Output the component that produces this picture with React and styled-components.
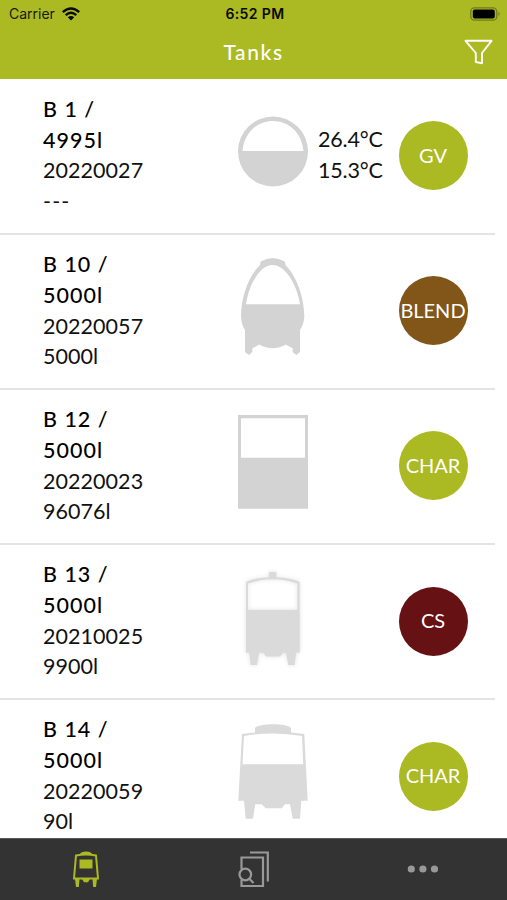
import React from 'react';
import styled, { createGlobalStyle } from 'styled-components';

const GlobalStyle = createGlobalStyle`
  * {
    box-sizing: border-box;
  }
  body {
    margin: 0;
    background: #fff;
  }
`;

const Screen = styled.div`
  display: flex;
  flex-direction: column;
  width: 507px;
  height: 900px;
  overflow: hidden;
  background: #fff;
  color: #111;
  font-family: Lato, 'Noto Sans', sans-serif;
`;

const Header = styled.header`
  flex: none;
  height: 79px;
  background: #abb922;
`;

const StatusBar = styled.div`
  display: grid;
  grid-template-columns: 1fr auto 1fr;
  align-items: center;
  height: 27px;
  padding: 0 6px 0 9px;
  color: #17190a;
  font-family: Inter, 'Liberation Sans', sans-serif;
  font-size: 14px;
`;

const Carrier = styled.div`
  display: flex;
  align-items: center;
  gap: 7px;
`;

const Clock = styled.div`
  color: #090a02;
  font-size: 14px;
  font-weight: 600;
  letter-spacing: 0.4px;
`;

const Battery = styled.svg`
  justify-self: end;
`;

const NavBar = styled.div`
  display: grid;
  grid-template-columns: 1fr auto 1fr;
  align-items: center;
  height: 50px;
  padding: 0 14px;
`;

const Title = styled.h1`
  grid-column: 2;
  margin: 0;
  padding-bottom: 2px;
  color: #fff;
  font-size: 21px;
  font-weight: 500;
  letter-spacing: 1.6px;
`;

const FilterButton = styled.button`
  justify-self: end;
  display: flex;
  padding: 0;
  border: none;
  background: none;
`;

const List = styled.main`
  flex: 1;
  min-height: 0;
  padding-top: 1px;
  overflow: hidden;
`;

const Row = styled.div`
  display: grid;
  grid-template-columns: 195px 70px 90.5px 69px;
  width: 495px;
  height: 155.1px;
  padding-left: 43px;
  border-bottom: 2px solid #e4e4e4;
`;

const Details = styled.div`
  padding-top: 14px;
  font-size: 21.5px;
  line-height: 30.7px;
`;

const Name = styled.div`
  width: 90px;
  color: #000;
  font-weight: 500;
  letter-spacing: 1px;
`;

const Lot = styled.div`
  letter-spacing: ${(props) => (props.$empty ? '1.2px' : '0.05px')};
`;

const TankIcon = styled.svg`
  margin-top: 23px;
  fill: ${(props) => props.$color};
  filter: ${(props) => (props.$glow ? 'drop-shadow(0 0 2px rgba(0, 0, 0, 0.12))' : 'none')};
`;

const Temperatures = styled.div`
  padding: 44px 0 0 10px;
  font-size: 21.5px;
  line-height: 30.7px;
  letter-spacing: -0.2px;
`;

const Badge = styled.div`
  display: flex;
  align-items: center;
  justify-content: center;
  width: 69px;
  height: 69px;
  margin-top: 41.3px;
  padding-bottom: 2px;
  border-radius: 50%;
  background: ${(props) => props.$color};
  color: #fff;
  font-size: 20px;
  white-space: nowrap;
`;

const TabBar = styled.nav`
  flex: none;
  display: grid;
  grid-template-columns: repeat(3, 1fr);
  height: 62px;
  border-top: 1px solid #58585a;
  background: #333;
`;

const Tab = styled.button`
  display: flex;
  align-items: center;
  justify-content: center;
  padding: 0 0 1px ${(props) => props.$shift || '0'};
  border: none;
  background: none;
  color: ${(props) => (props.$active ? '#abb922' : '#999')};
`;

const shapes = {
  round: (
    <path
      fillRule="evenodd"
      d="M35 13.500a35 35 0 1 0 0 70a35 35 0 1 0 0-70zM35 18C51 18 64 30 65.500 48H4.500C6 30 19 18 35 18z"
    />
  ),
  egg: (
    <path
      fillRule="evenodd"
      d="M22.700 3.500Q34.700-3.500 46.700 3.500L47.700 7.500C59 18 66.300 41 66.300 58C66.300 64 64 69 62 72V94L58.300 97L54.700 94V90.300L47.700 86.500Q34.700 94 21.300 86.500L14.300 90.300V94L11 97L7 94V72C5 69 3 64 3 58C3 41 10 18 21.700 7.500zM8 46.300H62C59 26 47 7 34.700 7C22 7 11 26 8 46.300z"
    />
  ),
  square: <path fillRule="evenodd" d="M0 2H70V95.700H0zM3 5.300V44.700H67V5.300z" />,
  cylinder: (
    <path
      fillRule="evenodd"
      d="M31 4H38.300V9.300Q53 9.800 61.700 14V84.700H58L56.700 97H50.300L48 84.700H45.300L42 88.500H28L25.300 84.700H21L19 97H12.700L11.300 84.700H8V14Q16 9.800 31 9.300zM10 15.500V42H59.300V15.500Q35 7 10 15.500z"
    />
  ),
  wagon: (
    <path
      fillRule="evenodd"
      d="M17 9.500V5C21 0 49 0 53 5V9.500L66.300 11L69.700 77.700H63.300L62 95.700H54.700L52 81.300H47L43.700 85.300H27.700L23.700 81.300H17.300L15 95.700H7.700L6 77.700H.300L4 11zM6 13L4.500 41.300H65.200L64 13Q35 8 6 13z"
    />
  ),
};

const tanks = [
  { name: 'B 1 / 4995l', lot: '20220027', volume: '---', shape: 'round', temps: ['26.4°C', '15.3°C'], badge: 'GV', color: '#abb922' },
  { name: 'B 10 / 5000l', lot: '20220057', volume: '5000l', shape: 'egg', badge: 'BLEND', color: '#825619' },
  { name: 'B 12 / 5000l', lot: '20220023', volume: '96076l', shape: 'square', badge: 'CHAR', color: '#abb922' },
  { name: 'B 13 / 5000l', lot: '20210025', volume: '9900l', shape: 'cylinder', badge: 'CS', color: '#661114', light: true },
  { name: 'B 14 / 5000l', lot: '20220059', volume: '90l', shape: 'wagon', badge: 'CHAR', color: '#abb922', light: true },
];

const TankRow = ({ tank }) => (
  <Row>
    <Details>
      <Name>{tank.name}</Name>
      <Lot>{tank.lot}</Lot>
      <Lot $empty={tank.volume === '---'}>{tank.volume}</Lot>
    </Details>
    <TankIcon
      width="70"
      height="98"
      viewBox="0 0 70 98"
      $color={tank.light ? '#dadada' : '#d3d3d3'}
      $glow={tank.shape === 'cylinder'}
    >
      {shapes[tank.shape]}
    </TankIcon>
    <Temperatures>
      {tank.temps && tank.temps.map((temp) => <div key={temp}>{temp}</div>)}
    </Temperatures>
    <Badge $color={tank.color}>{tank.badge}</Badge>
  </Row>
);

const App = () => {
  return (
    <Screen>
      <GlobalStyle />
      <Header>
        <StatusBar>
          <Carrier>
            Carrier
            <svg width="18" height="14" viewBox="0 0 18 14" fill="none" stroke="#090a02" strokeWidth="2.300">
              <path d="M.8 5.200Q9-2.200 17.200 5.200M3.700 8.200Q9 3.400 14.300 8.200" />
              <path d="M9 13.500L5.800 10.200Q9 7.600 12.200 10.200z" fill="#090a02" stroke="none" />
            </svg>
          </Carrier>
          <Clock>6:52 PM</Clock>
          <Battery width="31" height="14" viewBox="0 0 31 14">
            <rect x=".8" y=".8" width="26" height="12.400" rx="3.800" fill="none" stroke="#727c18" strokeWidth="1.300" />
            <rect x="2.800" y="2.500" width="22" height="9" rx="2" fill="#000" />
            <path d="M28.500 4.800Q31 7 28.500 9.200z" fill="#727c18" />
          </Battery>
        </StatusBar>
        <NavBar>
          <Title>Tanks</Title>
          <FilterButton>
            <svg width="29" height="26" viewBox="0 0 29 26" fill="none" stroke="#fff" strokeWidth="1.900" strokeLinejoin="round">
              <path d="M1.500 1.800H27.500L18 14V24.200L11.800 23V14z" />
            </svg>
          </FilterButton>
        </NavBar>
      </Header>
      <List>
        {tanks.map((tank) => (
          <TankRow key={tank.name} tank={tank} />
        ))}
      </List>
      <TabBar>
        <Tab $active $shift="3px">
          <svg width="26" height="37" viewBox="0 0 26 37" fill="none" stroke="currentColor" strokeWidth="2">
            <path d="M3 4.500Q13 2.500 23 4.500L25 27.500H1z" />
            <path d="M6.500 3.500Q8 .5 13 .5T19.500 3.500z" fill="currentColor" stroke="none" />
            <path d="M6.500 8.500H19.500V17.500H6.500zM2 28H6.500L5.800 36H3zM19.500 28H24L23 36H20.200zM9 28H17L15 31.300H11z" fill="currentColor" stroke="none" />
          </svg>
        </Tab>
        <Tab>
          <svg width="32" height="37" viewBox="0 0 32 37" fill="none" stroke="currentColor" strokeWidth="2.200">
            <path d="M12 1.500H29.800V30.500" />
            <path d="M3.500 18V6.500H25V35H3.500V29" />
            <circle cx="7.300" cy="23.500" r="5.800" />
            <path d="M11.300 27.700L15.500 32" />
          </svg>
        </Tab>
        <Tab>
          <svg width="32" height="8" viewBox="0 0 32 8" fill="currentColor">
            <circle cx="4.300" cy="4" r="3.600" />
            <circle cx="15.900" cy="4" r="3.600" />
            <circle cx="27.500" cy="4" r="3.600" />
          </svg>
        </Tab>
      </TabBar>
    </Screen>
  );
};

export default App;
